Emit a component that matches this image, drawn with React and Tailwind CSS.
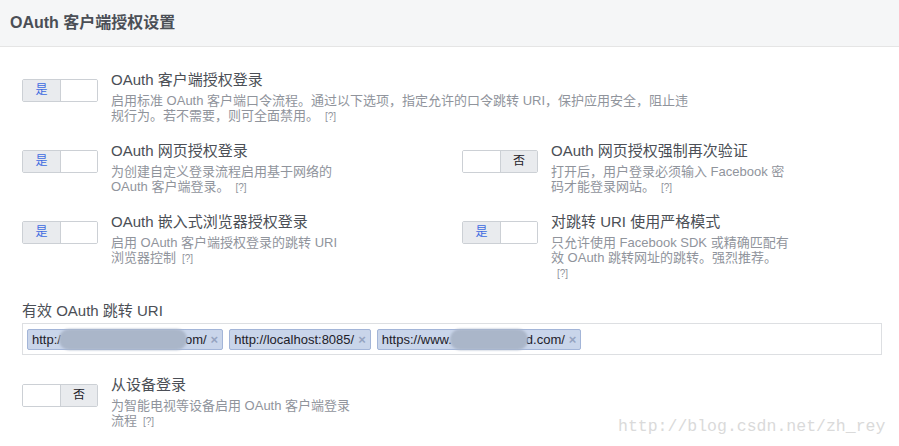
import React from "react";

const FONT = { fontFamily: '"Liberation Sans", "Noto Sans CJK SC", sans-serif' };

function Toggle({ on }) {
  return (
    <div className="flex h-[23px] w-[76px] shrink-0 overflow-hidden rounded-[2px] border border-[#ccd0d5] bg-white text-[12px] leading-[21px]">
      <div
        className={
          "flex w-[38px] items-center justify-center border-r border-[#ccd0d5] " +
          (on ? "bg-[#e9ebee] text-[#3d6ae0]" : "bg-white")
        }
      >
        {on ? "是" : ""}
      </div>
      <div
        className={
          "flex flex-1 items-center justify-center " +
          (!on ? "bg-[#e9ebee] text-[#1d2129]" : "bg-white")
        }
      >
        {!on ? "否" : ""}
      </div>
    </div>
  );
}

function Help() {
  return <span className="ml-[6px] text-[10px] leading-[15px] text-[#90949c]">[?]</span>;
}

function Setting({ on, title, desc, descWidth = "w-[242px]" }) {
  return (
    <div className="flex gap-[13px]">
      <div className="mt-[9px]">
        <Toggle on={on} />
      </div>
      <div>
        <div className="text-[15px] leading-[20px] text-[#4b4f56]">{title}</div>
        <div className={"mt-[3px] text-[13px] leading-[15px] text-[#90949c] " + descWidth}>
          {desc}
          <Help />
        </div>
      </div>
    </div>
  );
}

function Token({ children }) {
  return (
    <div className="flex h-[21px] items-center rounded-[2px] border border-[#a3b5d8] bg-[#c9d5ea] pl-[4px] pr-[4px] text-[13px] leading-[19px] text-[#1d2129]">
      <span className="flex items-center whitespace-nowrap">{children}</span>
      <span className="ml-[4px] text-[13px] font-bold text-[#95a3c0]">×</span>
    </div>
  );
}

function Blur({ w }) {
  return (
    <span
      className="mx-[-2px] inline-block h-[21px] rounded-[10px] bg-[#aab6c9] blur-[1px]"
      style={{ width: w }}
    />
  );
}

export default function App() {
  return (
    <div className="relative h-[446px] w-[899px] overflow-hidden bg-white" style={FONT}>
      <div className="flex h-[47px] items-center border-b border-[#e5e5e5] bg-[#f5f6f7] px-[10px]">
        <div className="text-[16px] font-bold text-[#4b4f56]">OAuth 客户端授权设置</div>
      </div>

      <div className="px-[22px] pt-[23px]">
        <Setting
          on
          title="OAuth 客户端授权登录"
          desc="启用标准 OAuth 客户端口令流程。通过以下选项，指定允许的口令跳转 URI，保护应用安全，阻止违规行为。若不需要，则可全面禁用。"
          descWidth="w-[590px]"
        />

        <div className="mt-[17px] grid grid-cols-[440px_1fr] gap-y-[17px]">
          <Setting
            on
            title="OAuth 网页授权登录"
            desc="为创建自定义登录流程启用基于网络的 OAuth 客户端登录。"
          />
          <Setting
            on={false}
            title="OAuth 网页授权强制再次验证"
            desc="打开后，用户登录必须输入 Facebook 密码才能登录网站。"
          />
          <Setting
            on
            title="OAuth 嵌入式浏览器授权登录"
            desc="启用 OAuth 客户端授权登录的跳转 URI 浏览器控制"
          />
          <Setting
            on
            title="对跳转 URI 使用严格模式"
            desc="只允许使用 Facebook SDK 或精确匹配有效 OAuth 跳转网址的跳转。强烈推荐。"
          />
        </div>

        <div className="mt-[20px] text-[15px] leading-[20px] text-[#4b4f56]">有效 OAuth 跳转 URI</div>
        <div className="mt-[2px] flex h-[32px] w-[860px] items-center gap-[6px] border border-[#dddfe2] bg-white px-[4px]">
          <Token>
            http:/
            <Blur w={128} />
            om/
          </Token>
          <Token>http://localhost:8085/</Token>
          <Token>
            https://www.
            <Blur w={78} />
            d.com/
          </Token>
        </div>

        <div className="mt-[20px]">
          <Setting
            on={false}
            title="从设备登录"
            desc="为智能电视等设备启用 OAuth 客户端登录流程"
          />
        </div>
      </div>

      <div
        className="absolute left-[618px] top-[416px] text-[16.5px] leading-[22px] text-[#dadada]"
        style={{ fontFamily: '"Liberation Mono", monospace' }}
      >
        http://blog.csdn.net/zh_rey
      </div>
    </div>
  );
}
